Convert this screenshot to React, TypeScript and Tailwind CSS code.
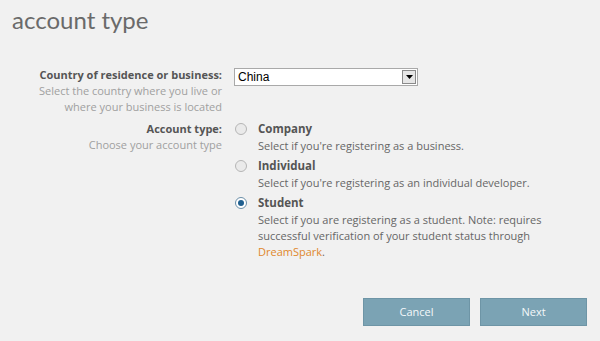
export default function App() {
  const font = { fontFamily: '"Open Sans", "Noto Sans", sans-serif' };

  const options = [
    { title: "Company", desc: "Select if you're registering as a business.", checked: false },
    { title: "Individual", desc: "Select if you're registering as an individual developer.", checked: false },
    { title: "Student", desc: null, checked: true },
  ];

  return (
    <main className="h-[341px] w-[600px] overflow-hidden bg-[#f1f1f1] text-[11px] leading-[16px]" style={font}>
      <h1
        className="pl-[12px] pt-[4px] text-[24px] leading-[32px] text-[#6a6a6a]"
        style={{ fontFamily: 'Lato, "Open Sans", sans-serif' }}
      >
        account type
      </h1>

      <div className="mt-[31px] grid grid-cols-[222px_1fr] gap-x-[12px]">
        <div className="text-right">
          <div className="font-bold text-[#555]">Country of residence or business:</div>
          <div className="text-[#a0a0a0]">Select the country where you live or</div>
          <div className="text-[#a0a0a0]">where your business is located</div>
        </div>
        <div className="pt-[1px]">
          <div className="flex h-[18px] w-[184px] items-center border border-[#a9a9a9] bg-white">
            <span className="flex-1 pl-[3px] text-[12px] text-black" style={{ fontFamily: '"Liberation Sans", Arial, sans-serif' }}>
              China
            </span>
            <span className="mr-[1px] flex h-[14px] w-[14px] items-center justify-center border border-[#8a8a8a] bg-[#e6e6e6]">
              <svg width="7" height="4" viewBox="0 0 7 4">
                <path d="M0 0h7L3.5 4z" fill="#000" />
              </svg>
            </span>
          </div>
        </div>

        <div className="mt-[6px] text-right">
          <div className="font-bold text-[#555]">Account type:</div>
          <div className="text-[#a0a0a0]">Choose your account type</div>
        </div>
        <div className="mt-[5px] flex flex-col gap-[3px]">
          {options.map((o) => (
            <div key={o.title} className="flex">
              <div className="w-[24px] pl-[1px] pt-[3px]">
                {o.checked ? (
                  <span className="flex h-[12px] w-[12px] items-center justify-center rounded-full border border-[#6b8fa8] bg-white">
                    <span className="h-[6px] w-[6px] rounded-full bg-[#1f5f8f]" />
                  </span>
                ) : (
                  <span className="block h-[12px] w-[12px] rounded-full border border-[#b5b5b5] bg-[#eaeaea]" />
                )}
              </div>
              <div>
                <div className="text-[11.5px] font-bold leading-[18px] text-[#555]">{o.title}</div>
                <div className="text-[#666]">
                  {o.desc ?? (
                    <>
                      Select if you are registering as a student. Note: requires
                      <br />
                      successful verification of your student status through
                      <br />
                      <span className="text-[#e0882c]">DreamSpark</span>.
                    </>
                  )}
                </div>
              </div>
            </div>
          ))}
        </div>
      </div>

      <div className="mt-[38px] flex justify-end gap-[10px] pr-[13px]">
        <button className="h-[28px] w-[107px] border border-[#6e95a6] bg-[#7ba3b4] text-[11px] text-[#f4f8fa]">Cancel</button>
        <button className="h-[28px] w-[107px] border border-[#6e95a6] bg-[#7ba3b4] text-[11px] text-[#f4f8fa]">Next</button>
      </div>
    </main>
  );
}
